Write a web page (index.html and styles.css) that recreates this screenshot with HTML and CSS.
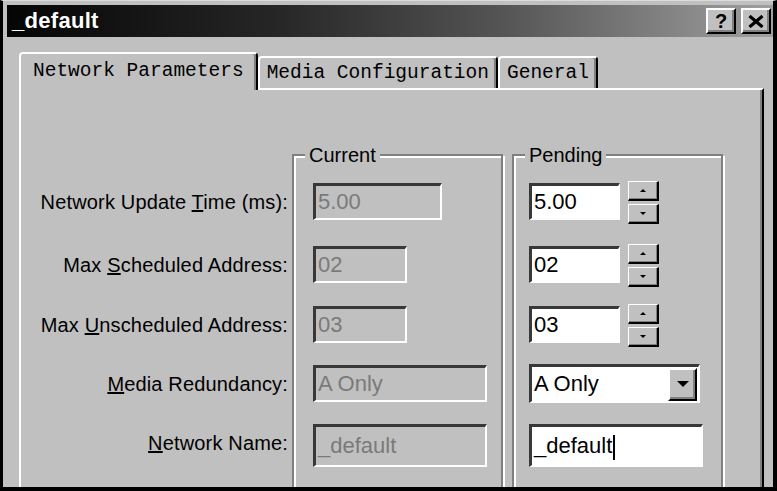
FILE: index.html
```html
<!DOCTYPE html>
<html lang="en">
<head>
<meta charset="UTF-8">
<meta name="viewport" content="width=device-width, initial-scale=1.0">
<title>_default</title>
<link rel="stylesheet" href="styles.css">
</head>
<body>

<div class="window">
    <div class="titlebar">
        <span class="title">_default</span>
        <div class="caption-buttons">
            <div class="caption-btn">?</div>
            <div class="caption-btn">
                <svg width="16" height="13" viewBox="0 0 16 13"><path d="M1.5 1 L14.5 12 M14.5 1 L1.5 12" stroke="#000" stroke-width="3.2" fill="none"/></svg>
            </div>
        </div>
    </div>

    <div class="tabs">
        <div class="tab active">Network Parameters</div>
        <div class="tab">Media Configuration</div>
        <div class="tab">General</div>
    </div>

    <div class="panel">
        <div class="labels rows">
            <div class="label">Network Update <u>T</u>ime (ms):</div>
            <div class="label">Max <u>S</u>cheduled Address:</div>
            <div class="label">Max <u>U</u>nscheduled Address:</div>
            <div class="label"><u>M</u>edia Redundancy:</div>
            <div class="label"><u>N</u>etwork Name:</div>
        </div>

        <div class="group current">
            <div class="group-title">Current</div>
            <div class="rows">
                <div class="field disabled w-time">5.00</div>
                <div class="field disabled w-addr">02</div>
                <div class="field disabled w-addr">03</div>
                <div class="field disabled w-wide">A Only</div>
                <div class="field disabled w-wide tall">_default</div>
            </div>
        </div>

        <div class="group pending">
            <div class="group-title">Pending</div>
            <div class="rows">
                <div class="spin-row">
                    <div class="field w-spin">5.00</div>
                    <div class="spinner">
                        <div class="spin-btn"><span class="arrow-up"></span></div>
                        <div class="spin-btn"><span class="arrow-down"></span></div>
                    </div>
                </div>
                <div class="spin-row">
                    <div class="field w-spin">02</div>
                    <div class="spinner">
                        <div class="spin-btn"><span class="arrow-up"></span></div>
                        <div class="spin-btn"><span class="arrow-down"></span></div>
                    </div>
                </div>
                <div class="spin-row">
                    <div class="field w-spin">03</div>
                    <div class="spinner">
                        <div class="spin-btn"><span class="arrow-up"></span></div>
                        <div class="spin-btn"><span class="arrow-down"></span></div>
                    </div>
                </div>
                <div class="combo">
                    <span>A Only</span>
                    <div class="combo-btn"><span class="arrow-big"></span></div>
                </div>
                <div class="field w-wide tall">_default<span class="caret"></span></div>
            </div>
        </div>
    </div>
</div>

</body>
</html>
```

FILE: styles.css
```css
body {
    margin: 0;
    padding: 0;
    background-color: #c0c0c0;
    font-family: "Liberation Sans", Arial, sans-serif;
}
.window {
    box-sizing: border-box;
    width: 777px;
    height: 491px;
    overflow: hidden;
    background-color: #c0c0c0;
    border-top: 1px solid #dcdcdc;
    border-left: 3px solid #000;
    border-right: 4px solid #000;
    border-bottom: 4px solid #000;
    padding: 4px 0 0 4px;
}

/* title bar */
.titlebar {
    display: flex;
    align-items: center;
    justify-content: space-between;
    height: 32px;
    padding: 0 2px 0 5px;
    background: linear-gradient(to right, #050505 0%, #262626 35%, #555 65%, #a0a0a0 100%);
}
.title {
    color: #fff;
    font-weight: bold;
    font-size: 22px;
    letter-spacing: 0.3px;
}
.caption-buttons {
    display: flex;
    gap: 5px;
}
.caption-btn {
    box-sizing: border-box;
    width: 30px;
    height: 26px;
    display: flex;
    align-items: center;
    justify-content: center;
    background-color: #c0c0c0;
    border: 2px solid;
    border-color: #fff #000 #000 #fff;
    box-shadow: inset -2px -2px #808080;
    font-weight: bold;
    font-size: 20px;
}

/* tabs */
.tabs {
    position: relative;
    z-index: 1;
    display: flex;
    align-items: flex-end;
    margin: 15px 0 -2px 12px;
}
.tab {
    box-sizing: border-box;
    height: 32px;
    margin-bottom: 2px;
    padding: 0 7px;
    display: flex;
    align-items: center;
    font-family: "Liberation Mono", "Courier New", monospace;
    font-size: 19.5px;
    background-color: #c0c0c0;
    border-top: 2px solid #fff;
    border-left: 2px solid #fff;
    border-right: 2px solid #000;
    border-radius: 4px 4px 0 0;
    box-shadow: inset -2px 0 #808080;
}
.tab.active {
    height: 38px;
    margin-bottom: 0;
    padding: 0 12px 2px;
}

/* tab page */
.panel {
    display: flex;
    align-items: flex-start;
    height: 440px;
    margin: 0 9px 0 12px;
    border-top: 2px solid #fff;
    border-left: 2px solid #fff;
    border-right: 2px solid #000;
    box-shadow: inset -2px 0 #808080;
}
.rows {
    display: grid;
    grid-template-rows: 63px 60px 59px 59px 44px;
    align-items: start;
}
.labels {
    width: 267px;
    margin-top: 93px;
    text-align: right;
    font-size: 20px;
    letter-spacing: 0.16px;
}
.labels .label {
    line-height: 38px;
    white-space: nowrap;
}

/* group boxes */
.group {
    box-sizing: border-box;
    width: 211px;
    height: 400px;
    margin: 64px 0 0 4px;
    border: 2px solid #808080;
    box-shadow: inset 2px 2px #fff, 2px 2px #fff;
}
.group.pending {
    margin-left: 9px;
}
.group-title {
    width: fit-content;
    margin: -12px 0 0 11px;
    padding: 0 4px;
    background-color: #c0c0c0;
    font-size: 20px;
    line-height: 22px;
}
.group .rows {
    margin-top: 17px;
}
.current .rows {
    padding-left: 19px;
}
.pending .rows {
    padding-left: 15px;
}

/* edit fields */
.field {
    box-sizing: border-box;
    height: 37px;
    padding-left: 2px;
    border-style: solid;
    border-width: 3px 2px 2px 3px;
    border-color: #383838 #fff #fff #383838;
    background-color: #fff;
    color: #000;
    font-size: 22px;
    line-height: 32px;
    white-space: nowrap;
    overflow: hidden;
}
.field.disabled {
    background-color: #c0c0c0;
    color: #7a7a7a;
}
.field.tall {
    height: 43px;
    line-height: 38px;
}
.w-time { width: 129px; }
.w-addr { width: 94px; }
.w-wide { width: 174px; }
.w-spin { width: 91px; }
.caret {
    display: inline-block;
    width: 2px;
    height: 25px;
    margin-left: 1px;
    vertical-align: middle;
    background-color: #000;
}

/* spin buttons */
.spin-row {
    display: flex;
    align-items: flex-start;
}
.spinner {
    display: flex;
    flex-direction: column;
    gap: 3px;
    margin: -2px 0 0 8px;
}
.spin-btn {
    box-sizing: border-box;
    width: 31px;
    height: 20px;
    display: flex;
    align-items: center;
    justify-content: center;
    background-color: #c0c0c0;
    border-style: solid;
    border-width: 1px 2px 2px 1px;
    border-color: #fff #000 #000 #fff;
    box-shadow: inset -1px -1px #808080;
}
.arrow-up {
    border-left: 3px solid transparent;
    border-right: 3px solid transparent;
    border-bottom: 3px solid #000;
}
.arrow-down {
    border-left: 3px solid transparent;
    border-right: 3px solid transparent;
    border-top: 3px solid #000;
}

/* drop down */
.combo {
    box-sizing: border-box;
    width: 171px;
    height: 39px;
    margin-top: -1px;
    padding-left: 2px;
    display: flex;
    align-items: center;
    justify-content: space-between;
    border-style: solid;
    border-width: 3px 2px 2px 3px;
    border-color: #383838 #fff #fff #383838;
    background-color: #fff;
    font-size: 22px;
}
.combo-btn {
    box-sizing: border-box;
    width: 29px;
    height: 33px;
    margin-right: 1px;
    display: flex;
    align-items: center;
    justify-content: center;
    background-color: #c0c0c0;
    border: 2px solid;
    border-color: #fff #000 #000 #fff;
    box-shadow: inset -2px -2px #808080;
}
.arrow-big {
    border-left: 6px solid transparent;
    border-right: 6px solid transparent;
    border-top: 6px solid #000;
}
```
